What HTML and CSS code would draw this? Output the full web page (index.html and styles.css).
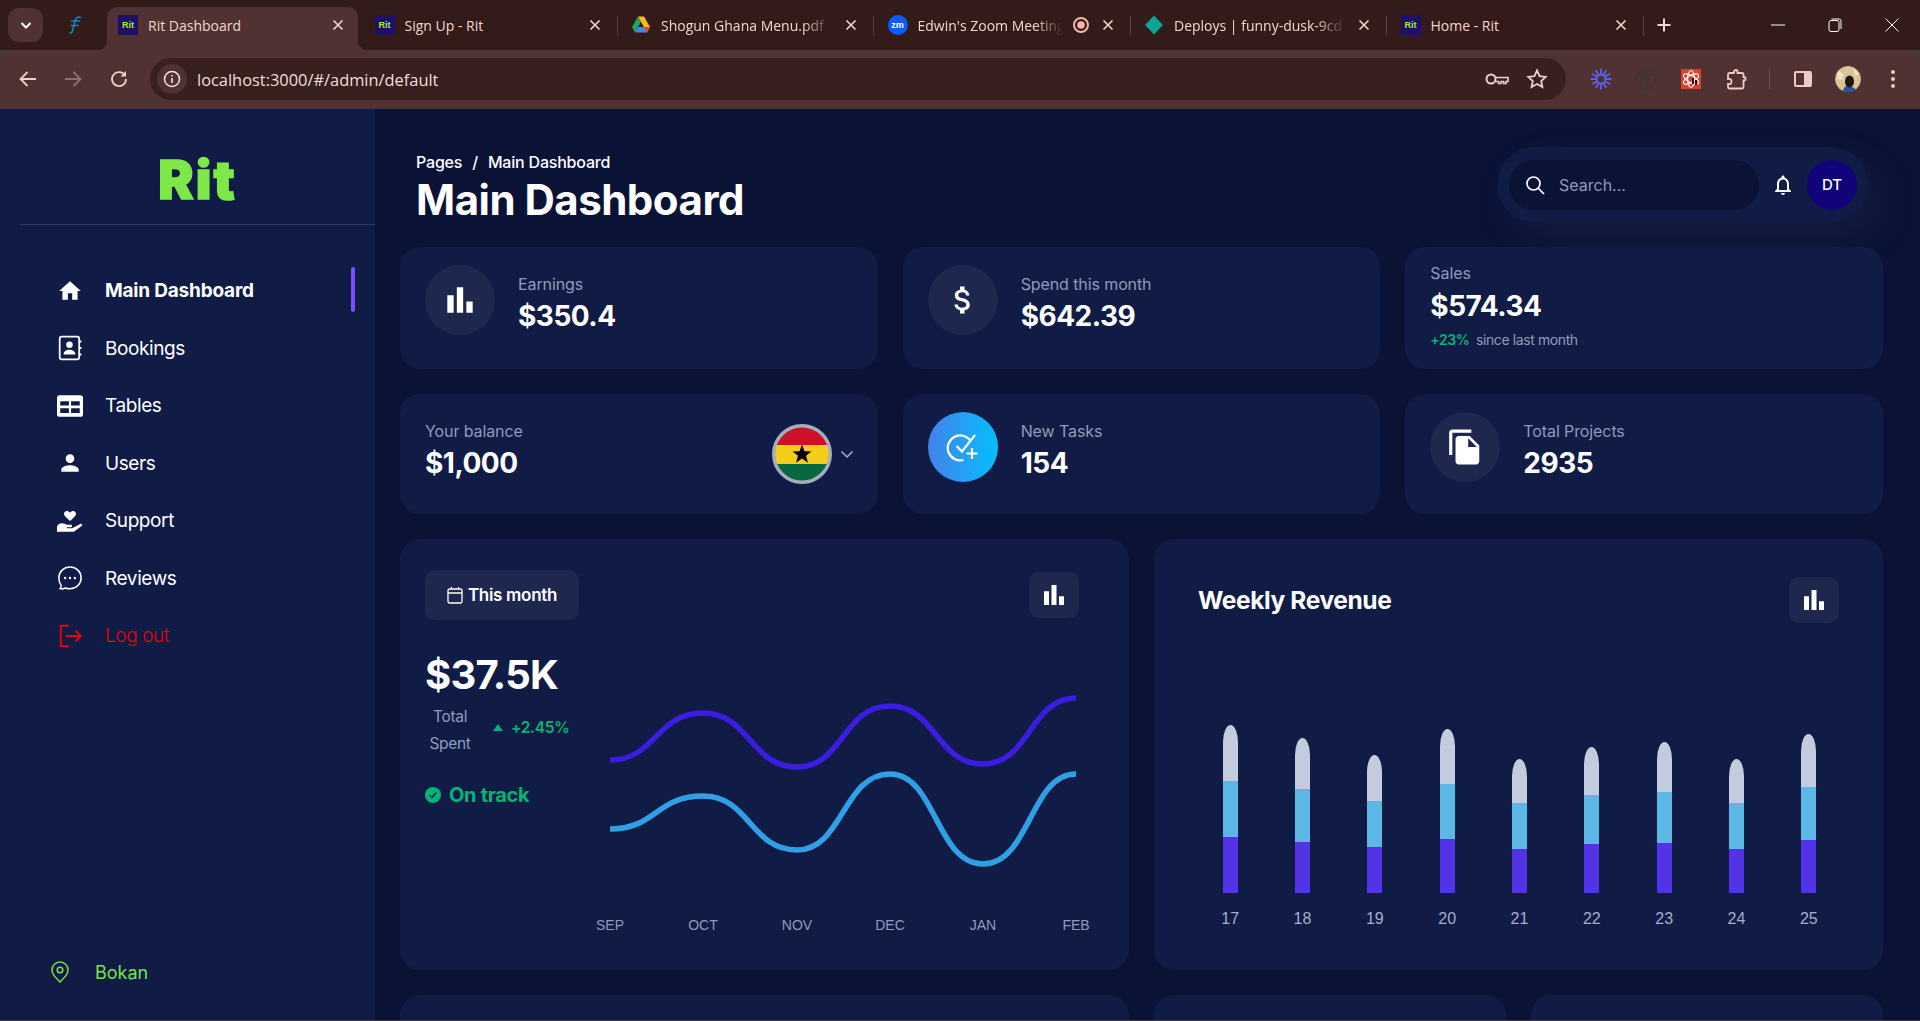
FILE: index.html
```html
<!DOCTYPE html>
<html lang="en">
<head>
  <meta charset="UTF-8" />
  <title>Rit Dashboard</title>
  <link rel="stylesheet" href="styles.css">
</head>
<body>
  <svg class="defs" width="0" height="0">
    <symbol id="i-bars" viewBox="0 0 24 24"><path d="M4 9h4v11H4zm12 4h4v7h-4zm-6-9h4v16h-4z"/></symbol>
    <symbol id="i-close" viewBox="0 0 16 16"><path d="M3.5 3.5l9 9m0-9l-9 9" fill="none" stroke="currentColor" stroke-width="1.6"/></symbol>
  </svg>

  <div class="tabstrip">
    <div class="tab-menu">
      <svg width="14" height="14" viewBox="0 0 14 14"><path d="M2.5 5l4.5 4.5L11.500 5" fill="none" stroke="#fff" stroke-width="2"/></svg>
    </div>
    <div class="pinned">
      <svg width="14" height="18" viewBox="0 0 14 18"><path d="M13 1.500C10 .5 8 1.500 7.200 4.500L4.500 15c-.4 1.500-1.500 2.200-3 2M3 5h9M2.500 9.500h8" fill="none" stroke="#0f86c4" stroke-width="1.600"/></svg>
    </div>
    <div class="tab tab-active">
      <span class="fav-rit">Rit</span>
      <span class="tab-title">Rit Dashboard</span>
      <svg class="tab-x"><use href="#i-close"/></svg>
    </div>
    <div class="tab">
      <span class="fav-rit">Rit</span>
      <span class="tab-title">Sign Up - Rit</span>
      <svg class="tab-x"><use href="#i-close"/></svg>
      <i class="tab-sep"></i>
    </div>
    <div class="tab">
      <svg class="fav" viewBox="0 0 20 20">
        <path d="M7 1.500h6l6 10.500h-6z" fill="#f7bf1e"/>
        <path d="M7 1.500L1 12l3 5.500L10 7z" fill="#1fa463"/>
        <path d="M4 17.500h12l3-5.500H7z" fill="#4285f4"/>
        <path d="M13 12h6l-3 5.500z" fill="#ea4335"/>
      </svg>
      <span class="tab-title tab-fade">Shogun Ghana Menu.pdf</span>
      <svg class="tab-x"><use href="#i-close"/></svg>
      <i class="tab-sep"></i>
    </div>
    <div class="tab">
      <span class="fav-zoom">zm</span>
      <span class="tab-title tab-fade">Edwin's Zoom Meeting</span>
      <svg class="rec" width="18" height="18" viewBox="0 0 18 18"><circle cx="9" cy="9" r="7" fill="none" stroke="#f5b5ab" stroke-width="2"/><circle cx="9" cy="9" r="3.800" fill="#f5b5ab"/></svg>
      <svg class="tab-x"><use href="#i-close"/></svg>
      <i class="tab-sep"></i>
    </div>
    <div class="tab">
      <svg class="fav" viewBox="0 0 20 20"><path d="M10 .5l9 9.500-9 9.500-9-9.500z" fill="#0ea294"/></svg>
      <span class="tab-title tab-fade">Deploys | funny-dusk-9cd1f2</span>
      <svg class="tab-x"><use href="#i-close"/></svg>
      <i class="tab-sep"></i>
    </div>
    <div class="tab">
      <span class="fav-rit">Rit</span>
      <span class="tab-title">Home - Rit</span>
      <svg class="tab-x"><use href="#i-close"/></svg>
      <i class="tab-sep"></i>
    </div>
    <svg class="tab-plus" width="20" height="20" viewBox="0 0 20 20"><path d="M10 3.500v13M3.500 10h13" stroke="#f3d5cf" stroke-width="2"/></svg>
    <div class="win-btns">
      <span class="win-btn"><svg width="14" height="14" viewBox="0 0 14 14"><path d="M0 7h14" stroke="#fff" stroke-width="1"/></svg></span>
      <span class="win-btn"><svg width="14" height="14" viewBox="0 0 14 14"><rect x="1" y="2.500" width="10" height="11" rx="2" fill="none" stroke="#fff"/><path d="M3.500 1H11c1.500 0 2 .8 2 2v8" fill="none" stroke="#fff"/></svg></span>
      <span class="win-btn"><svg width="14" height="14" viewBox="0 0 14 14"><path d="M.5.5l13 13m0-13l-13 13" stroke="#fff" stroke-width="1"/></svg></span>
    </div>
  </div>

  <div class="toolbar">
    <span class="tool"><svg width="20" height="20" viewBox="0 0 20 20"><path d="M18 10H3m6.500-7L2.500 10l7 7" fill="none" stroke="#f3cfc8" stroke-width="1.800"/></svg></span>
    <span class="tool"><svg width="20" height="20" viewBox="0 0 20 20"><path d="M2 10h15m-6.500-7l7 7-7 7" fill="none" stroke="#8f706b" stroke-width="1.800"/></svg></span>
    <span class="tool"><svg width="20" height="20" viewBox="0 0 20 20"><path d="M16 6.500A7 7 0 1 0 17 10" fill="none" stroke="#f3cfc8" stroke-width="1.800"/><path d="M17 2v5.500h-5.500z" fill="#f3cfc8"/></svg></span>
    <div class="urlbar">
      <span class="url-info"><svg width="18" height="18" viewBox="0 0 18 18"><circle cx="9" cy="9" r="7.500" fill="none" stroke="#f3e3df" stroke-width="1.500"/><path d="M9 8v5M9 5v1.600" stroke="#f3e3df" stroke-width="1.600"/></svg></span>
      <span class="url-text">localhost:3000/#/admin/default</span>
      <span class="url-icons">
        <svg width="24" height="16" viewBox="0 0 24 16"><circle cx="6" cy="8" r="4.500" fill="none" stroke="#e9d2cd" stroke-width="2"/><path d="M10.500 6.500H23v4h-2v2h-2.500v-2H16v2h-2.500v-2h-3" fill="none" stroke="#e9d2cd" stroke-width="1.600"/></svg>
        <svg width="22" height="22" viewBox="0 0 22 22"><path d="M11 2.500l2.600 5.600 6.100.7-4.500 4.200 1.200 6L11 16l-5.400 3 1.200-6-4.500-4.200 6.100-.7z" fill="none" stroke="#e9d2cd" stroke-width="1.800"/></svg>
      </span>
    </div>
    <div class="tool-right">
      <span class="tool"><svg width="22" height="22" viewBox="0 0 22 22" stroke="#5b5ff0" stroke-width="1.800"><circle cx="11" cy="11" r="4.500" fill="none" stroke-width="2"/><path d="M11 .5V6M11 16v5.500M.5 11H6M16 11h5.500M16.200 2l-2.700 4.700M8.500 15.300L5.800 20M20 5.800l-4.700 2.700M6.700 13.500L2 16.200M20 16.200l-4.700-2.700M6.700 8.500L2 5.800M16.200 20l-2.700-4.700M8.500 6.700L5.800 2"/></svg></span>
      <span class="tool"><svg width="22" height="22" viewBox="0 0 22 22" fill="none" stroke="#3d3535" stroke-width="1.300"><circle cx="11" cy="11" r="9.800"/><path d="M11 20v-9M11 11C9 7 6.500 6 4.500 8M11 11c2-4 4.500-5 6.500-3M11 11C9.500 6.500 9.500 4 11 3c1.500 1 1.500 3.500 0 8zM11 11c-3-1-5 0-6 3M11 11c3-1 5 0 6 3"/></svg></span>
      <span class="tool"><span class="ext-red"><svg width="20" height="20" viewBox="0 0 20 20" fill="none" stroke="#fff" stroke-width="1.100"><ellipse cx="10" cy="10" rx="8.500" ry="3.400" transform="rotate(30 10 10)"/><ellipse cx="10" cy="10" rx="8.500" ry="3.400" transform="rotate(-30 10 10)"/><ellipse cx="10" cy="10" rx="8.500" ry="3.400" transform="rotate(90 10 10)"/><path d="M11 9h2v6h-2zM14 11h2v5h-2z" fill="#2a1512" stroke="none"/></svg></span></span>
      <span class="tool"><svg width="22" height="22" viewBox="0 0 22 22"><path d="M9 3.500c0-2 3.500-2 3.500 0V5H17a1.500 1.500 0 0 1 1.500 1.500V9h.500c2 0 2 3.500 0 3.500h-.5V19a1.500 1.500 0 0 1-1.500 1.500H4.500A1.500 1.500 0 0 1 3 19v-3c2.500.5 3.500-.5 3.500-2.500S5.500 10.500 3 11V6.500A1.500 1.500 0 0 1 4.500 5H9z" fill="none" stroke="#efc9c2" stroke-width="1.800"/></svg></span>
      <i class="tool-sep"></i>
      <span class="tool"><svg width="20" height="20" viewBox="0 0 20 20"><rect x="1" y="2" width="18" height="16" rx="2" fill="#efc9c2"/><rect x="3" y="4" width="8" height="12" fill="#4f3231"/></svg></span>
      <span class="tool"><svg class="avatar-img" width="26" height="26" viewBox="0 0 26 26"><circle cx="13" cy="13" r="13" fill="#d9c596"/><path d="M3 5l6 3-2 6-5-1zM18 2l6 6-4 2z" fill="#efe5cc"/><path d="M8 26c0-4 2-6 5-6s7 2 8 4l-3 2z" fill="#2a4fa0"/><ellipse cx="14.500" cy="15.500" rx="4.500" ry="6" fill="#20140f"/></svg></span>
      <span class="tool"><svg width="6" height="20" viewBox="0 0 6 20" fill="#efc9c2"><circle cx="3" cy="3" r="2"/><circle cx="3" cy="10" r="2"/><circle cx="3" cy="17" r="2"/></svg></span>
    </div>
  </div>

  <div class="page">
    <aside class="sidebar">
      <div class="logo">Rit</div>
      <nav class="side-nav">
        <a class="nav-item nav-active">
          <svg class="nav-icon" viewBox="0 0 24 24" fill="#fff"><path d="M10 20v-6h4v6h5v-8h3L12 3 2 12h3v8z"/></svg>
          Main Dashboard
        </a>
        <a class="nav-item">
          <svg class="nav-icon" viewBox="0 0 24 24"><rect x="2.500" y="1.500" width="18" height="21" rx="2" fill="none" stroke="#fff" stroke-width="1.600"/><circle cx="11.500" cy="9" r="3" fill="#fff"/><path d="M6 18c0-3 2.500-4.500 5.500-4.500S17 15 17 18z" fill="#fff"/><path d="M20 6h2.500M20 12h2.500M20 18h2.500" stroke="#fff" stroke-width="2"/></svg>
          Bookings
        </a>
        <a class="nav-item">
          <svg class="nav-icon" viewBox="0 0 24 24"><rect y="2" width="24" height="20" rx="2.500" fill="#fff"/><path d="M3 7.500h8v4H3zM13 7.500h8v4h-8zM3 14h8v4.500H3zM13 14h8v4.500h-8z" fill="#101c45"/></svg>
          Tables
        </a>
        <a class="nav-item">
          <svg class="nav-icon" viewBox="0 0 24 24" fill="#fff"><path d="M12 12c2.210 0 4-1.790 4-4s-1.790-4-4-4-4 1.790-4 4 1.790 4 4 4zm0 2c-2.670 0-8 1.340-8 4v2h16v-2c0-2.660-5.330-4-8-4z"/></svg>
          Users
        </a>
        <a class="nav-item">
          <svg class="nav-icon" viewBox="0 0 24 24" fill="#fff"><path d="M12 12L8.300 8.600C7.100 7.500 6.500 6.500 6.500 5.400 6.500 3.900 7.700 2.800 9.100 2.800c1.100 0 2.100.5 2.900 1.500.8-1 1.800-1.500 2.900-1.500 1.400 0 2.600 1.100 2.600 2.600 0 1.100-.6 2.100-1.800 3.200z"/><path d="M0 17c1-2 2.500-3 4.500-3 2 0 3.500 1 5 1.500h3.500c1.200 0 1.200 2.200 0 2.200H9v1h5l7.500-4c1.400-.6 2.500 1 1.300 2L15.500 22H0z"/></svg>
          Support
        </a>
        <a class="nav-item">
          <svg class="nav-icon" viewBox="0 0 24 24"><path d="M12 1.800c5.800 0 10.300 4.400 10.300 10S17.800 22 12 22c-1.500 0-3-.3-4.300-.8-1.500.8-3.500 1-4.800.6 1-1 1.200-2 .8-3.200C2.500 17 1.700 14.500 1.700 11.800 1.700 6.200 6.200 1.800 12 1.800z" fill="none" stroke="#fff" stroke-width="1.400"/><circle cx="7.500" cy="12" r="1.100" fill="#fff"/><circle cx="12" cy="12" r="1.100" fill="#fff"/><circle cx="16.500" cy="12" r="1.100" fill="#fff"/></svg>
          Reviews
        </a>
        <a class="nav-item nav-logout">
          <svg class="nav-icon" viewBox="0 0 24 24" fill="none" stroke="#e8000b" stroke-width="1.800"><path d="M11 2.500H3.500v19H11"/><path d="M8 12h14m-5-5l5 5-5 5"/></svg>
          Log out
        </a>
      </nav>
      <div class="side-location">
        <svg width="20" height="22" viewBox="0 0 20 22" fill="none" stroke="#7ae047" stroke-width="1.500"><path d="M10 21C5 16 2 13 2 9a8 8 0 0 1 16 0c0 4-3 7-8 12z"/><circle cx="10" cy="9" r="2.800"/></svg>
        Bokan
      </div>
    </aside>

    <main class="main">
      <header class="topbar">
        <div class="page-title">
          <div class="crumbs"><span>Pages</span><span class="crumb-slash">/</span><span>Main Dashboard</span></div>
          <h1>Main Dashboard</h1>
        </div>
        <div class="top-pill">
          <div class="search">
            <svg width="20" height="20" viewBox="0 0 20 20" fill="none" stroke="#fff" stroke-width="1.700"><circle cx="8.500" cy="8.500" r="6.500"/><path d="M13.500 13.500L19 19"/></svg>
            <span>Search...</span>
          </div>
          <svg class="bell" width="24" height="24" viewBox="0 0 24 24" fill="#fff"><path d="M12 22c1.100 0 2-.9 2-2h-4c0 1.100.9 2 2 2zm6-6v-5c0-3.070-1.630-5.640-4.500-6.320V4c0-.83-.67-1.500-1.500-1.500s-1.500.67-1.500 1.500v.68C7.640 5.360 6 7.920 6 11v5l-2 2v1h16v-1l-2-2zm-2 1H8v-6c0-2.480 1.510-4.500 4-4.500s4 2.020 4 4.500v6z"/></svg>
          <div class="avatar">DT</div>
        </div>
      </header>

      <section class="stats">
        <div class="card stat">
          <span class="stat-icon"><svg width="38" height="38" fill="#fff"><use href="#i-bars"/></svg></span>
          <div class="stat-text"><p class="label">Earnings</p><p class="value">$350.4</p></div>
        </div>
        <div class="card stat">
          <span class="stat-icon"><svg width="36" height="36" viewBox="0 0 24 24" fill="#fff"><path d="M11.800 10.900c-2.270-.59-3-1.200-3-2.150 0-1.090 1.010-1.850 2.700-1.850 1.780 0 2.440.85 2.500 2.100h2.210c-.07-1.720-1.120-3.300-3.210-3.810V3h-3v2.160c-1.940.42-3.500 1.680-3.500 3.610 0 2.310 1.910 3.460 4.700 4.130 2.500.6 3 1.480 3 2.410 0 .69-.49 1.790-2.700 1.790-2.060 0-2.870-.92-2.980-2.100h-2.200c.12 2.190 1.760 3.420 3.680 3.830V21h3v-2.150c1.950-.37 3.500-1.500 3.500-3.550 0-2.840-2.430-3.810-4.700-4.400z"/></svg></span>
          <div class="stat-text"><p class="label">Spend this month</p><p class="value">$642.39</p></div>
        </div>
        <div class="card sales">
          <p class="label">Sales</p>
          <p class="value">$574.34</p>
          <p class="sales-note"><span class="up">+23%</span> since last month</p>
        </div>
        <div class="card stat">
          <div class="stat-text"><p class="label">Your balance</p><p class="value">$1,000</p></div>
          <div class="balance-pick">
            <svg width="60" height="60" viewBox="0 0 60 60">
              <clipPath id="flag-clip"><circle cx="30" cy="30" r="28"/></clipPath>
              <g clip-path="url(#flag-clip)">
                <rect width="60" height="21" fill="#ce1126"/>
                <rect y="21" width="60" height="19" fill="#f3cd17"/>
                <rect y="40" width="60" height="20" fill="#066a3e"/>
              </g>
              <path d="M30 20.500l2.500 6.800 7 .1-5.500 4.300 2 7-6-4.100-6 4.100 2-7-5.500-4.300 7-.1z" fill="#000"/>
              <circle cx="30" cy="30" r="28.300" fill="none" stroke="#a3aebf" stroke-width="3.400"/>
            </svg>
            <svg width="14" height="14" viewBox="0 0 14 14"><path d="M1.500 4.500L7 10l5.500-5.500" fill="none" stroke="#a3aed0" stroke-width="1.500"/></svg>
          </div>
        </div>
        <div class="card stat">
          <span class="stat-icon stat-icon-blue"><svg width="34" height="34" viewBox="0 0 34 34" fill="none" stroke="#fff" stroke-width="2.200"><path d="M25 11.500A12.500 12.500 0 1 0 17.500 30"/><path d="M10.500 16l5.500 5.500L29 5"/><path d="M26 18v11M20.500 23.500h11"/></svg></span>
          <div class="stat-text"><p class="label">New Tasks</p><p class="value">154</p></div>
        </div>
        <div class="card stat">
          <span class="stat-icon"><svg width="38" height="38" viewBox="0 0 24 24" fill="#fff"><path d="M16 1H4c-1.100 0-2 .9-2 2v14h2V3h12V1zm-1 4 6 6v10c0 1.100-.9 2-2 2H7.990C6.890 23 6 22.100 6 21l.01-14c0-1.100.89-2 1.990-2h7zm-1 7h5.500L14 6.500V12z"/></svg></span>
          <div class="stat-text"><p class="label">Total Projects</p><p class="value">2935</p></div>
        </div>
      </section>

      <section class="charts">
        <div class="card chart-card month-card">
          <div class="month-head">
            <button class="month-btn">
              <svg width="16" height="18" viewBox="0 0 16 18" fill="none" stroke="#fff" stroke-width="1.300"><rect x="1" y="3" width="14" height="14" rx="1.500"/><path d="M1 7h14M4.500 1v3M11.500 1v3"/></svg>
              This month
            </button>
            <span class="icon-btn"><svg width="30" height="30" fill="#fff"><use href="#i-bars"/></svg></span>
          </div>
          <div class="month-body">
            <div class="month-info">
              <div class="big-amount">$37.5K</div>
              <div class="spent-row">
                <div class="spent-label">Total Spent</div>
                <svg class="spent-arrow" width="10" height="7" viewBox="0 0 10 7"><path d="M5 0l5 7H0z" fill="#01b574"/></svg>
                <span class="spent-up">+2.45%</span>
              </div>
              <div class="on-track">
                <svg width="16" height="16" viewBox="0 0 16 16"><circle cx="8" cy="8" r="8" fill="#01b574"/><path d="M4.500 8l2.500 2.500 4.500-5" fill="none" stroke="#101c45" stroke-width="1.400"/></svg>
                On track
              </div>
            </div>
            <svg class="line-chart" width="510" height="260" viewBox="590 680 510 260">
              <path d="M610 760 C 656 760 656 713 703 713 C 750 713 750 767 797 767 C 843 767 843 706 890 706 C 936 706 936 764 983 764 C 1030 764 1030 698 1076 698" fill="none" stroke="#3a1de0" stroke-width="5.500"/>
              <path d="M610 829 C 656 829 656 796 703 796 C 750 796 750 850 797 850 C 843 850 843 774 890 774 C 936 774 936 864 983 864 C 1030 864 1030 774 1076 774" fill="none" stroke="#30a0e6" stroke-width="5.500"/>
              <g class="axis-labels">
                <text x="610" y="930">SEP</text>
                <text x="703" y="930">OCT</text>
                <text x="797" y="930">NOV</text>
                <text x="890" y="930">DEC</text>
                <text x="983" y="930">JAN</text>
                <text x="1076" y="930">FEB</text>
              </g>
            </svg>
          </div>
        </div>

        <div class="card chart-card week-card">
          <div class="week-head">
            <h2>Weekly Revenue</h2>
            <span class="icon-btn"><svg width="30" height="30" fill="#fff"><use href="#i-bars"/></svg></span>
          </div>
          <div class="week-bars">
            <div class="bar-col"><div class="bar"><i class="seg-grey" style="height:56px"></i><i class="seg-blue" style="height:56px"></i><i class="seg-purple" style="height:56px"></i></div><span>17</span></div>
            <div class="bar-col"><div class="bar"><i class="seg-grey" style="height:51px"></i><i class="seg-blue" style="height:53px"></i><i class="seg-purple" style="height:51px"></i></div><span>18</span></div>
            <div class="bar-col"><div class="bar"><i class="seg-grey" style="height:46px"></i><i class="seg-blue" style="height:46px"></i><i class="seg-purple" style="height:46px"></i></div><span>19</span></div>
            <div class="bar-col"><div class="bar"><i class="seg-grey" style="height:55px"></i><i class="seg-blue" style="height:55px"></i><i class="seg-purple" style="height:54px"></i></div><span>20</span></div>
            <div class="bar-col"><div class="bar"><i class="seg-grey" style="height:44px"></i><i class="seg-blue" style="height:46px"></i><i class="seg-purple" style="height:44px"></i></div><span>21</span></div>
            <div class="bar-col"><div class="bar"><i class="seg-grey" style="height:48px"></i><i class="seg-blue" style="height:49px"></i><i class="seg-purple" style="height:49px"></i></div><span>22</span></div>
            <div class="bar-col"><div class="bar"><i class="seg-grey" style="height:50px"></i><i class="seg-blue" style="height:51px"></i><i class="seg-purple" style="height:50px"></i></div><span>23</span></div>
            <div class="bar-col"><div class="bar"><i class="seg-grey" style="height:44px"></i><i class="seg-blue" style="height:46px"></i><i class="seg-purple" style="height:44px"></i></div><span>24</span></div>
            <div class="bar-col"><div class="bar"><i class="seg-grey" style="height:53px"></i><i class="seg-blue" style="height:53px"></i><i class="seg-purple" style="height:53px"></i></div><span>25</span></div>
          </div>
        </div>
      </section>

      <section class="bottom-row">
        <div class="card"></div>
        <div class="card"></div>
        <div class="card"></div>
      </section>
    </main>
  </div>
</body>
</html>
```

FILE: styles.css
```css
* {
  box-sizing: border-box;
}

body {
  margin: 0;
  height: 1021px;
  overflow: hidden;
  background: #3b3b40;
  font-family: Inter, "Noto Sans", sans-serif;
  color: #fff;
}

p, h1, h2 {
  margin: 0;
}

.defs {
  position: absolute;
}

/* browser tabs */
.tabstrip {
  height: 50px;
  display: flex;
  align-items: flex-end;
  padding-left: 8px;
  background: #321b18;
  font-family: "Open Sans", sans-serif;
  font-size: 14px;
  color: #f3d5cf;
}

.tab-menu {
  width: 35px;
  height: 34px;
  margin-bottom: 8px;
  display: flex;
  align-items: center;
  justify-content: center;
  border-radius: 11px;
  background: #4f3231;
}

.pinned {
  width: 64px;
  height: 50px;
  display: flex;
  align-items: center;
  justify-content: center;
}

.tab {
  position: relative;
  width: 256.5px;
  height: 43px;
  padding: 0 2.5px 7px 11px;
  display: flex;
  align-items: center;
  gap: 10px;
  border-radius: 10px 10px 0 0;
}

.tab-active {
  width: 251px;
  margin-right: 5.5px;
  background: #4f3231;
}

.tab-active .tab-x {
  margin-right: 9.5px;
}

.tab-active::before,
.tab-active::after {
  content: "";
  position: absolute;
  bottom: 0;
  width: 10px;
  height: 10px;
}

.tab-active::before {
  left: -10px;
  background: radial-gradient(circle at 0 0, #321b18 10px, #4f3231 10.5px);
}

.tab-active::after {
  right: -10px;
  background: radial-gradient(circle at 100% 0, #321b18 10px, #4f3231 10.5px);
}

.fav-rit {
  flex: none;
  width: 20px;
  height: 20px;
  display: flex;
  align-items: center;
  justify-content: center;
  background: #1e0f68;
  color: #a6f02e;
  font: bold 9px "Liberation Sans", sans-serif;
}

.fav {
  flex: none;
  width: 20px;
  height: 20px;
}

.fav-zoom {
  flex: none;
  width: 20px;
  height: 20px;
  display: flex;
  align-items: center;
  justify-content: center;
  border-radius: 50%;
  background: #0b5cff;
  color: #fff;
  font: bold 9px "Liberation Sans", sans-serif;
}

.tab-title {
  flex: 1;
  min-width: 0;
  overflow: hidden;
  white-space: nowrap;
}

.tab-fade {
  -webkit-mask-image: linear-gradient(90deg, #000 82%, transparent);
  mask-image: linear-gradient(90deg, #000 82%, transparent);
}

.rec {
  flex: none;
}

.tab-x {
  flex: none;
  width: 16px;
  height: 16px;
  margin-right: 15px;
}

.tab-sep {
  position: absolute;
  right: 2.500px;
  top: 9px;
  width: 1px;
  height: 20px;
  background: #5c403c;
}

.tab-plus {
  margin: 0 0 15px 8px;
}

.win-btns {
  margin-left: auto;
  display: flex;
  height: 50px;
}

.win-btn {
  width: 57px;
  display: flex;
  align-items: center;
  justify-content: center;
}

/* browser address row */
.toolbar {
  height: 59px;
  padding: 0 0 1px 5px;
  display: flex;
  align-items: center;
  background: #4f3231;
  border-radius: 12px 12px 0 0;
}

.tool {
  width: 45.5px;
  height: 40px;
  flex: none;
  display: flex;
  align-items: center;
  justify-content: center;
}

.urlbar {
  flex: 1;
  height: 42px;
  margin-left: 8.500px;
  padding: 0 18px 0 7px;
  display: flex;
  align-items: center;
  border-radius: 21px;
  background: #37201d;
}

.url-info {
  width: 30px;
  height: 30px;
  display: flex;
  align-items: center;
  justify-content: center;
  border-radius: 50%;
  background: #4f3231;
}

.url-text {
  margin-left: 10px;
  font: 16.400px "Open Sans", sans-serif;
  color: #f3ddd8;
}

.url-icons {
  margin-left: auto;
  display: flex;
  align-items: center;
  gap: 17px;
}

.tool-right {
  width: 354px;
  flex: none;
  padding-left: 12px;
  display: flex;
  align-items: center;
}

.tool-right .tool {
  width: 45px;
}

.ext-red {
  width: 20px;
  height: 20px;
  background: #d8432f;
  display: block;
}

.tool-sep {
  width: 1px;
  height: 20px;
  margin: 0 10px 0 11px;
  background: #6e504c;
}

.avatar-img {
  border-radius: 50%;
}

/* page */
.page {
  height: 911px;
  display: flex;
  background: #0a1236;
}

.sidebar {
  width: 375px;
  flex: none;
  display: flex;
  flex-direction: column;
  background: #101c45;
}

.logo {
  height: 116px;
  margin-left: 20px;
  padding-top: 26px;
  display: flex;
  align-items: center;
  justify-content: center;
  border-bottom: 1px solid #2c3a69;
  font-family: Inter, sans-serif;
  font-weight: 900;
  font-size: 53px;
  letter-spacing: 2px;
  -webkit-text-stroke: 1.5px #7de847;
  color: #7de847;
}

.side-nav {
  margin-top: 37px;
}

.nav-item {
  position: relative;
  height: 57.500px;
  padding-left: 57px;
  display: flex;
  align-items: center;
  gap: 22px;
  font-size: 19px;
  font-weight: 400;
  letter-spacing: -0.4px;
}

.nav-icon {
  width: 26px;
  height: 26px;
  flex: none;
}

.nav-active {
  font-weight: 700;
  letter-spacing: -0.2px;
}

.nav-active::after {
  content: "";
  position: absolute;
  left: 351px;
  top: 5px;
  width: 4px;
  height: 45px;
  border-radius: 2px;
  background: #7551ff;
}

.nav-logout {
  color: #e8000b;
  font-weight: 300;
}

.side-location {
  margin-top: auto;
  padding: 0 0 37px 50px;
  display: flex;
  align-items: center;
  gap: 25px;
  font-size: 18px;
  color: #7ae047;
}

.main {
  flex: 1;
  min-width: 0;
  height: 911px;
  overflow: hidden;
  padding: 0 37px 0 25px;
}

.topbar {
  height: 138px;
  display: flex;
  justify-content: space-between;
  align-items: flex-start;
}

.page-title {
  margin: 43px 0 0 16px;
}

.crumbs {
  display: flex;
  gap: 10px;
  font-size: 16px;
  font-weight: 500;
  line-height: 20px;
  letter-spacing: -0.2px;
}

h1 {
  font-size: 42px;
  font-weight: 700;
  line-height: 56px;
  letter-spacing: -0.5px;
}

.top-pill {
  width: 371px;
  height: 75px;
  margin: 38px 15px 0 0;
  padding: 0 11px 0 12px;
  display: flex;
  align-items: center;
  border-radius: 38px;
  background: #101c45;
  box-shadow: 14px 17px 40px 4px rgba(112, 144, 176, 0.08);
}

.search {
  width: 250px;
  height: 50px;
  padding-left: 16px;
  display: flex;
  align-items: center;
  gap: 14px;
  border-radius: 25px;
  background: #0a1236;
  font-size: 16px;
  color: #8f9bba;
}

.bell {
  margin-left: 12px;
}

.avatar {
  width: 50px;
  height: 50px;
  margin-left: auto;
  display: flex;
  align-items: center;
  justify-content: center;
  border-radius: 50%;
  background: #11047a;
  font-size: 15px;
  font-weight: 500;
}

.card {
  border-radius: 20px;
  background: #101c45;
}

.stats {
  display: grid;
  grid-template-columns: repeat(3, 1fr);
  grid-template-rows: 122px 120px;
  gap: 25px;
}

.stat {
  padding: 18px 25px 0;
  height: 100%;
  display: flex;
  align-items: flex-start;
  gap: 23px;
}

.stat-icon {
  width: 70px;
  height: 70px;
  flex: none;
  display: flex;
  align-items: center;
  justify-content: center;
  border-radius: 50%;
  background: #1e284f;
}

.stat-icon-blue {
  background: linear-gradient(90deg, #4481eb, #04befe);
}

.label {
  font-size: 16px;
  line-height: 32px;
  letter-spacing: -0.1px;
  color: #8f9bba;
}

.value {
  font-size: 28px;
  font-weight: 700;
  line-height: 32px;
  letter-spacing: -0.5px;
}

.stat-text {
  margin-top: 3px;
}

.sales {
  padding: 10px 25px;
}

.sales .label,
.sales .value,
.sales-note {
  line-height: 33px;
}

.sales-note {
  font-size: 14px;
  letter-spacing: -0.4px;
  color: #8f9bba;
}

.up {
  margin-right: 3px;
  font-weight: 600;
  color: #01b574;
}

.balance-pick {
  margin: 12px -1px 0 auto;
  display: flex;
  align-items: center;
  gap: 8px;
}

.charts {
  margin-top: 25px;
  display: grid;
  grid-template-columns: 729px 729px;
  gap: 25px;
}

.chart-card {
  height: 431px;
}

.month-card {
  padding: 31px 50px 0 25px;
}

.month-head {
  display: flex;
  justify-content: space-between;
}

.month-btn {
  width: 154px;
  height: 50px;
  padding: 0;
  display: flex;
  align-items: center;
  justify-content: center;
  gap: 5px;
  border: none;
  border-radius: 10px;
  background: #1e284f;
  color: #fff;
  font-family: Inter, sans-serif;
  font-size: 17px;
  font-weight: 600;
  letter-spacing: -0.3px;
}

.icon-btn {
  width: 50px;
  height: 46px;
  display: flex;
  align-items: center;
  justify-content: center;
  border-radius: 10px;
  background: #1e284f;
}

.month-head .icon-btn {
  margin-top: 2px;
}

.month-body {
  margin-top: 20px;
  display: flex;
}

.month-info {
  width: 165px;
  flex: none;
  padding-top: 10px;
}

.big-amount {
  font-size: 40px;
  font-weight: 700;
  line-height: 50px;
  letter-spacing: -0.8px;
}

.spent-row {
  margin-top: 3px;
  display: flex;
  align-items: center;
  color: #8f9bba;
}

.spent-label {
  width: 50px;
  font-size: 15.500px;
  line-height: 27px;
  letter-spacing: -0.3px;
  text-align: center;
}

.spent-arrow {
  margin: -6px 0 0 18px;
}

.spent-up {
  margin: -6px 0 0 8px;
  font-size: 15.500px;
  font-weight: 600;
  letter-spacing: -0.3px;
  color: #01b574;
}

.on-track {
  margin-top: 27px;
  display: flex;
  align-items: center;
  gap: 8px;
  font-size: 20px;
  font-weight: 700;
  line-height: 22px;
  letter-spacing: -0.3px;
  color: #01b574;
}

.line-chart {
  margin: 40px 0 0 0;
  flex: none;
}

.axis-labels text {
  font: 14px "Liberation Sans", sans-serif;
  fill: #8f9bba;
  text-anchor: middle;
}

.week-card {
  padding: 38px 44px 0;
}

.week-head {
  height: 46px;
  display: flex;
  justify-content: space-between;
  align-items: center;
}

h2 {
  font-size: 24.500px;
  font-weight: 700;
  letter-spacing: -0.4px;
}

.week-bars {
  height: 306px;
  margin: 0 -6px 0 -4px;
  display: grid;
  grid-template-columns: repeat(9, 1fr);
}

.bar-col {
  display: flex;
  flex-direction: column;
  align-items: center;
  justify-content: flex-end;
  font: 16px/20px "Liberation Sans", sans-serif;
  color: #a3aed0;
}

.bar {
  width: 15px;
  margin-bottom: 16px;
  display: flex;
  flex-direction: column;
}

.bar i {
  display: block;
}

.seg-grey {
  background: #c3cbde;
  border-radius: 8px 8px 0 0 / 18px 18px 0 0;
}

.seg-blue {
  background: #5cb7e5;
}

.seg-purple {
  background: #5333e6;
}

.bottom-row {
  margin-top: 25px;
  display: grid;
  grid-template-columns: 729px 352px 352px;
  grid-template-rows: 200px;
  gap: 25px;
}
```
